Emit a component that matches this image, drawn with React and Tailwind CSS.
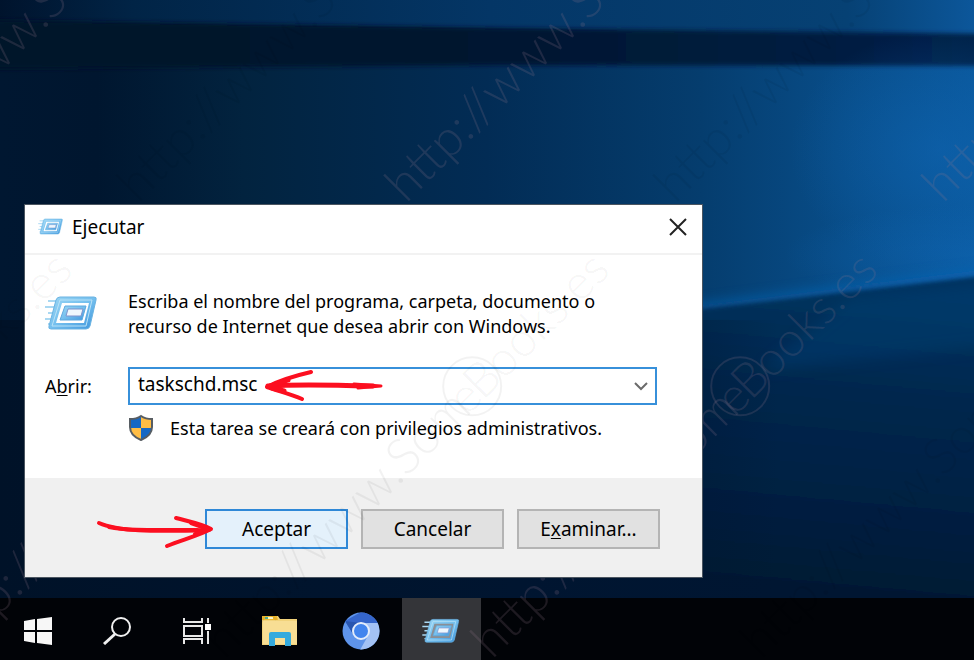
import React, { useId, useState } from "react";

function Wallpaper() {
  return (
    <svg
      className="absolute inset-0 h-full w-full"
      viewBox="0 0 974 660"
      preserveAspectRatio="none"
      aria-hidden="true"
    >
      <defs>
        <linearGradient id="sky" x1="0" y1="0" x2="1" y2="0">
          <stop offset="0" stopColor="#001731" />
          <stop offset="0.1" stopColor="#00162f" />
          <stop offset="0.25" stopColor="#02233f" />
          <stop offset="0.5" stopColor="#022c55" />
          <stop offset="0.72" stopColor="#053d6e" />
          <stop offset="0.86" stopColor="#084c87" />
          <stop offset="1" stopColor="#0a589c" />
        </linearGradient>
        <linearGradient id="topband" x1="0" y1="0" x2="1" y2="0">
          <stop offset="0" stopColor="#001129" />
          <stop offset="0.15" stopColor="#012446" />
          <stop offset="0.5" stopColor="#043666" />
          <stop offset="0.85" stopColor="#064174" />
          <stop offset="1" stopColor="#0d5ba2" />
        </linearGradient>
        <linearGradient id="beam" x1="0" y1="0" x2="1" y2="0">
          <stop offset="0" stopColor="#001229" />
          <stop offset="0.5" stopColor="#001730" />
          <stop offset="1" stopColor="#00214a" />
        </linearGradient>
        <linearGradient id="ground" gradientUnits="userSpaceOnUse" x1="800" y1="280" x2="770" y2="600">
          <stop offset="0" stopColor="#04335f" />
          <stop offset="0.35" stopColor="#02274d" />
          <stop offset="0.7" stopColor="#001f41" />
          <stop offset="1" stopColor="#001830" />
        </linearGradient>
        <linearGradient id="leftshade" x1="0" y1="0" x2="1" y2="0">
          <stop offset="0" stopColor="#001228" />
          <stop offset="0.55" stopColor="#001530" stopOpacity="0.9" />
          <stop offset="0.8" stopColor="#001530" stopOpacity="0" />
        </linearGradient>
        <radialGradient id="glow">
          <stop offset="0" stopColor="#0f66b4" stopOpacity="0.5" />
          <stop offset="1" stopColor="#0f66b4" stopOpacity="0" />
        </radialGradient>
        <filter id="soft" x="-10%" y="-50%" width="120%" height="200%">
          <feGaussianBlur stdDeviation="2" />
        </filter>
        <filter id="softer" x="-10%" y="-100%" width="120%" height="300%">
          <feGaussianBlur stdDeviation="7" />
        </filter>
      </defs>
      <rect width="974" height="660" fill="url(#sky)" />
      <path d="M-20 -20H1000V36L500 28L-20 22Z" fill="url(#topband)" />
      <path d="M-20 20L500 28L1000 34V66L500 65L-20 69Z" fill="url(#beam)" filter="url(#soft)" />
      <ellipse cx="940" cy="150" rx="150" ry="120" fill="url(#glow)" />
      <ellipse cx="974" cy="255" rx="190" ry="50" fill="url(#glow)" />
      <path d="M690 306L1000 268V282L690 316Z" fill="#1168b8" opacity="0.75" filter="url(#softer)" />
      <path d="M-20 370L700 309L760 302L1000 274V700H-20Z" fill="url(#ground)" filter="url(#soft)" />
      <path d="M760 370L1000 345V282L850 298Z" fill="#06447c" opacity="0.35" filter="url(#softer)" />
      <rect y="320" width="974" height="340" fill="url(#leftshade)" />
    </svg>
  );
}

function Mark({ x, y, color }) {
  return (
    <g transform={`translate(${x} ${y}) rotate(-45)`}>
      <text className="font-[Lato] text-[50px] font-light" fill={color}>
        http://www.Som
      </text>
      <text className="font-[Lato] text-[48px] font-light" fill={color}>
        <tspan x="344">e</tspan>
        <tspan x="366">B</tspan>
        <tspan x="395">ooks.es</tspan>
      </text>
      <circle cx="369" cy="-18" r="29" fill="none" stroke={color} strokeWidth="2" />
    </g>
  );
}

function Watermark({ marks, color, className }) {
  return (
    <svg className={`pointer-events-none absolute inset-0 h-full w-full ${className}`} aria-hidden="true">
      {marks.map(([x, y]) => (
        <Mark key={`${x}-${y}`} x={x} y={y} color={color} />
      ))}
    </svg>
  );
}

const lightMarks = [[-131, 204], [406, 204], [943, 204], [-45, 660], [492, 660]];
const darkMarks = [[138, 204], [675, 204], [-313, 660], [224, 660], [761, 660]];

function RunIcon({ className, gap = "#ffffff" }) {
  const id = useId();
  return (
    <svg className={className} viewBox="0 0 54 38" aria-hidden="true">
      <defs>
        <linearGradient id={id} x1="0" y1="0" x2="1" y2="1">
          <stop offset="0" stopColor="#9ad6f4" />
          <stop offset="0.5" stopColor="#74bfee" />
          <stop offset="1" stopColor="#3d95dc" />
        </linearGradient>
      </defs>
      <path d="M3 6H13M0 12H11M3 18H10M0 24H8M3 29H7" stroke="#a9d8f2" strokeWidth="2" />
      <path d="M15 2H49Q52 2 51 5L45 31Q44 34 41 34H6Q3 34 4 31L11 5Q12 2 15 2Z" fill={`url(#${id})`} stroke="#6ab3e2" />
      <path d="M15 5H47L41 31H7Z" fill="none" stroke="#b9e2f7" />
      <path d="M17 8H44L39 28H11Z" fill={gap} />
      <path d="M20 11H41L37 25H15Z" fill={`url(#${id})`} stroke="#5fa8de" />
      <path d="M23 14H38L36 21H21Z" fill="#eef7fd" stroke="#7f93cd" />
    </svg>
  );
}

function Shield() {
  return (
    <svg className="h-7 w-[26px] shrink-0" viewBox="0 0 26 28" aria-hidden="true">
      <path d="M13 2C10 4 6 5 2 5V13C2 20 8 24 13 26Z" fill="#1668c4" />
      <path d="M13 2C16 4 20 5 24 5V13C24 20 18 24 13 26Z" fill="#ffbd45" />
      <path d="M2 14H13V26C8 24 2 20 2 14Z" fill="#ffbd45" />
      <path d="M24 14H13V26C18 24 24 20 24 14Z" fill="#1668c4" />
      <path d="M13 2C10 4 6 5 2 5V13C2 20 8 24 13 26C18 24 24 20 24 13V5C20 5 16 4 13 2Z" fill="none" stroke="#575d63" strokeWidth="2" />
    </svg>
  );
}

function Dialog() {
  const [command, setCommand] = useState("taskschd.msc");
  const button = "h-10 w-[143px] border-2 text-center text-[19px]";
  return (
    <section
      aria-label="Ejecutar"
      className="relative w-[679px] max-w-full border border-[#4b5560] bg-white text-[18px] text-black"
    >
      <header className="flex h-[50px] items-center border-b-2 border-[#f2f2f2] pb-1 pl-[13px] pr-3">
        <RunIcon className="h-[18px] w-[26px]" />
        <h1 className="ml-2 flex-1 text-[19px]">Ejecutar</h1>
        <button type="button" aria-label="Cerrar" className="flex h-8 w-6 items-center justify-center">
          <svg className="h-[18px] w-[18px]" viewBox="0 0 18 18" aria-hidden="true">
            <path d="M1 1L17 17M17 1L1 17" stroke="#222222" strokeWidth="2" />
          </svg>
        </button>
      </header>

      <div className="h-[223px] px-5 pt-[34px]">
        <div className="flex">
          <RunIcon className="mt-[6px] h-[38px] w-[54px] shrink-0" />
          <p className="ml-[29px] leading-[25px]">
            Escriba el nombre del programa, carpeta, documento o
            <br />
            recurso de Internet que desea abrir con Windows.
          </p>
        </div>
        <div className="mt-7 flex items-center">
          <label htmlFor="command" className="w-[83px]">
            A<span className="underline underline-offset-2">b</span>rir:
          </label>
          <div className="relative flex h-[38px] w-[529px] border-2 border-[#3790da] bg-white">
            <input
              id="command"
              value={command}
              onChange={(e) => setCommand(e.target.value)}
              className="min-w-0 flex-1 px-2 pb-1 text-[19px] outline-none"
            />
            <button type="button" aria-label="Mostrar lista" className="flex w-7 items-center justify-center">
              <svg className="h-3 w-4" viewBox="0 0 16 12" aria-hidden="true">
                <path d="M2 3L8 9L14 3" fill="none" stroke="#6b6b6b" strokeWidth="2" />
              </svg>
            </button>
            <svg className="pointer-events-none absolute left-[134px] top-0 h-8 w-[122px]" viewBox="0 0 122 32" aria-hidden="true">
              <g fill="none" stroke="#fc0f20" strokeLinecap="round" strokeLinejoin="round">
                <path d="M47 3C34 6 16 11 3 18C14 22 27 25 38 30" strokeWidth="4" />
                <path d="M4 17C30 15 75 16 109 17" strokeWidth="5" />
                <path d="M90 15L117 17L94 19" strokeWidth="3" />
                <path d="M6 17L24 11M8 19L20 22" strokeWidth="5" />
              </g>
            </svg>
          </div>
        </div>
        <div className="ml-[83px] mt-[9px] flex items-center">
          <Shield />
          <p className="ml-4">Esta tarea se creará con privilegios administrativos.</p>
        </div>
      </div>

      <footer className="relative flex h-[99px] items-start justify-end gap-[13px] bg-[#f0f0f0] pr-[42px] pt-[31px]">
        <button type="button" className={`${button} border-[#2f88d7] bg-[#e4f1fb]`}>
          Aceptar
        </button>
        <button type="button" className={`${button} border-[#b4b4b4] bg-[#e1e1e1]`}>
          Cancelar
        </button>
        <button type="button" className={`${button} border-[#b4b4b4] bg-[#e1e1e1]`}>
          E<span className="underline underline-offset-2">x</span>aminar...
        </button>
        <svg className="pointer-events-none absolute left-[70px] top-[36px] h-[36px] w-[120px]" viewBox="0 0 120 36" aria-hidden="true">
          <g fill="none" stroke="#fc0f20" strokeLinecap="round" strokeLinejoin="round">
            <path d="M4 9C22 17 55 18 114 16" strokeWidth="4" />
            <path d="M14 13C32 17 60 16 102 16" strokeWidth="4" />
            <path d="M81 4C92 7 107 10 116 15C103 22 86 26 72 32" strokeWidth="4" />
            <path d="M96 9L113 15L100 20" strokeWidth="4" />
          </g>
        </svg>
      </footer>
    </section>
  );
}

function StartIcon() {
  return (
    <svg className="h-7 w-7" viewBox="0 0 28 28" fill="#f7f7f7" aria-hidden="true">
      <path d="M0 4L11 2V13H0ZM13 2L28 0V13H13ZM0 15H11V26L0 24ZM13 15H28V28L13 26Z" />
    </svg>
  );
}

function SearchIcon() {
  return (
    <svg className="h-7 w-7" viewBox="0 0 28 28" fill="none" stroke="#f0f0f0" strokeWidth="2" aria-hidden="true">
      <circle cx="18" cy="10" r="9" />
      <path d="M12 17L1 27" strokeWidth="3" />
    </svg>
  );
}

function TaskViewIcon() {
  return (
    <svg className="h-7 w-7" viewBox="0 0 28 28" fill="none" stroke="#e8e8e8" strokeWidth="2" aria-hidden="true">
      <path d="M1 1V5H19V1M1 9H19V19H1ZM1 27V22H19V27M25 1V6M25 14V27" />
      <path d="M22 7H28V13H22Z" fill="#ffffff" stroke="none" />
    </svg>
  );
}

function FolderIcon() {
  return (
    <svg className="h-8 w-9" viewBox="0 0 36 32" aria-hidden="true">
      <path d="M0 2Q0 1 1 1H16L18 4H35V30H0Z" fill="#f2d37b" />
      <path d="M0 2Q0 1 1 1H15L16 5H0Z" fill="#efb92f" />
      <path d="M3 2H11V4H3Z" fill="#f8f5cd" />
      <path d="M3 2H6V4H3Z" fill="#51ad8f" />
      <path d="M1 6H35V29H1Z" fill="#f8de94" />
      <path d="M7 31V19Q7 17 9 17H27Q29 17 29 19V31H23V23H13V31Z" fill="#35aadd" />
    </svg>
  );
}

function BrowserIcon() {
  return (
    <svg className="h-[38px] w-[38px]" viewBox="0 0 38 38" aria-hidden="true">
      <defs>
        <clipPath id="disc">
          <circle cx="19" cy="19" r="18.5" />
        </clipPath>
      </defs>
      <g clipPath="url(#disc)">
        <path d="M0 0H38V38H0Z" fill="#5e94ea" />
        <path d="M3 9L19 0H38V11H19L11 22Z" fill="#3566cb" />
        <path d="M3 9L11 22L19 11Z" fill="#2856b0" />
        <path d="M19 11H38V38H18L27 22Z" fill="#a3c2f5" />
      </g>
      <circle cx="19" cy="19" r="8" fill="#4285ee" stroke="#e4edfb" strokeWidth="2" />
    </svg>
  );
}

function Taskbar() {
  const slot = "flex h-full items-center justify-center pt-1";
  return (
    <nav aria-label="Barra de tareas" className="relative flex h-[62px] items-center bg-[#010307]">
      <button type="button" aria-label="Inicio" className={`${slot} w-[76px]`}><StartIcon /></button>
      <button type="button" aria-label="Buscar" className={`${slot} w-[82px]`}><SearchIcon /></button>
      <button type="button" aria-label="Vista de tareas" className={`${slot} w-[78px]`}><TaskViewIcon /></button>
      <button type="button" aria-label="Explorador de archivos" className={`${slot} w-[88px]`}><FolderIcon /></button>
      <button type="button" aria-label="Navegador" className={`${slot} w-[78px] pr-1`}><BrowserIcon /></button>
      <button type="button" aria-label="Ventana Ejecutar" className={`${slot} w-[79px] bg-[#343539]`}>
        <RunIcon className="h-[27px] w-[39px]" gap="#8c8f94" />
      </button>
    </nav>
  );
}

export default function App() {
  return (
    <div className="relative flex min-h-screen flex-col overflow-hidden bg-[#001830] font-['Noto_Sans',sans-serif]">
      <Wallpaper />
      <main className="relative z-20 flex flex-1 items-end pb-5 pl-6">
        <Dialog />
      </main>
      <Taskbar />
      <Watermark marks={lightMarks} color="rgba(150,120,140,0.2)" className="z-10" />
      <Watermark marks={darkMarks} color="rgba(0,0,0,0.05)" className="z-30" />
    </div>
  );
}
